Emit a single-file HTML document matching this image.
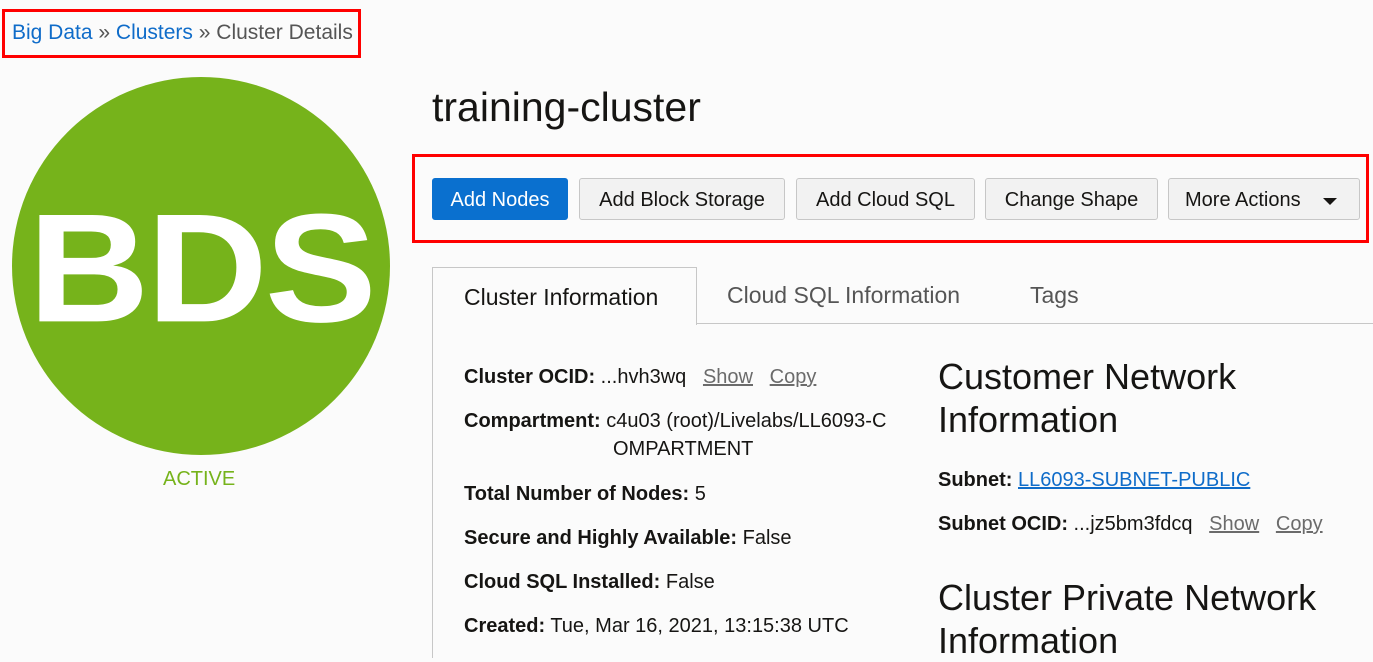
<!DOCTYPE html>
<html><head><meta charset="utf-8"><style>
body{margin:0;width:1373px;height:658px;background:#fbfbfb;font-family:"Liberation Sans",Arial,sans-serif;position:relative;overflow:hidden;color:#161513}
.a{position:absolute;white-space:nowrap}
.btn{position:absolute;top:178px;height:42px;border:1px solid #c7c7c7;border-radius:3px;background:#f2f2f2;font-size:20px;line-height:42px;text-align:center;color:#161513;box-sizing:border-box}
.lbl{font-size:20px}
.lbl b{font-weight:bold}
.lk{color:#6b6b6b;text-decoration:underline}
</style></head><body>
<div class="a" style="left:2px;top:9px;width:359px;height:49px;border:3px solid #f00;box-sizing:border-box"></div>
<div class="a" style="left:12px;top:21px;font-size:21px;color:#555"><span style="color:#0f6cc9">Big Data</span> » <span style="color:#0f6cc9">Clusters</span> » Cluster Details</div>
<div class="a" style="left:12px;top:77px;width:378px;height:378px;border-radius:50%;background:#76b31b"></div>
<div class="a" style="left:12px;top:178px;width:378px;text-align:center;font-size:168px;font-weight:bold;color:#fff;line-height:180px;letter-spacing:-3px;transform:scaleY(0.92)">BDS</div>
<div class="a" style="left:163px;top:468px;font-size:20px;color:#76b31b">ACTIVE</div>
<div class="a" style="left:432px;top:84px;font-size:41px;color:#161513">training-cluster</div>
<div class="a" style="left:412px;top:154px;width:957px;height:89px;border:3px solid #f00;box-sizing:border-box"></div>
<div class="btn" style="left:432px;width:136px;background:#0a70cf;border-color:#0a70cf;color:#fff">Add Nodes</div>
<div class="btn" style="left:579px;width:206px">Add Block Storage</div>
<div class="btn" style="left:796px;width:179px">Add Cloud SQL</div>
<div class="btn" style="left:985px;width:173px">Change Shape</div>
<div class="btn" style="left:1168px;width:192px;text-align:left;padding-left:16px">More Actions<span style="position:absolute;left:154px;top:19px;border-left:7px solid transparent;border-right:7px solid transparent;border-top:7px solid #161513"></span></div>
<div class="a" style="left:432px;top:323px;width:941px;border-top:1px solid #c7c7c7"></div>
<div class="a" style="left:432px;top:267px;width:265px;height:58px;border:1px solid #c7c7c7;border-bottom:none;background:#fbfbfb;box-sizing:border-box"></div>
<div class="a" style="left:464px;top:284px;font-size:23px">Cluster Information</div>
<div class="a" style="left:727px;top:282px;font-size:23px;color:#555">Cloud SQL Information</div>
<div class="a" style="left:1030px;top:282px;font-size:23px;color:#555">Tags</div>
<div class="a" style="left:432px;top:323px;width:1px;height:335px;background:#c7c7c7"></div>
<div class="a lbl" style="left:464px;top:366px"><b>Cluster OCID:</b> ...hvh3wq &nbsp;&nbsp;<span class="lk">Show</span> &nbsp;&nbsp;<span class="lk">Copy</span></div>
<div class="a lbl" style="left:464px;top:410px"><b>Compartment:</b> c4u03 (root)/Livelabs/LL6093-C</div>
<div class="a lbl" style="left:613px;top:438px">OMPARTMENT</div>
<div class="a lbl" style="left:464px;top:483px"><b>Total Number of Nodes:</b> 5</div>
<div class="a lbl" style="left:464px;top:527px"><b>Secure and Highly Available:</b> False</div>
<div class="a lbl" style="left:464px;top:571px"><b>Cloud SQL Installed:</b> False</div>
<div class="a lbl" style="left:464px;top:615px"><b>Created:</b> Tue, Mar 16, 2021, 13:15:38 UTC</div>
<div class="a" style="left:938px;top:355px;font-size:36px;line-height:43px">Customer Network<br>Information</div>
<div class="a lbl" style="left:938px;top:469px"><b>Subnet:</b> <span style="color:#0f6cc9;text-decoration:underline">LL6093-SUBNET-PUBLIC</span></div>
<div class="a lbl" style="left:938px;top:513px"><b>Subnet OCID:</b> ...jz5bm3fdcq &nbsp;&nbsp;<span class="lk">Show</span> &nbsp;&nbsp;<span class="lk">Copy</span></div>
<div class="a" style="left:938px;top:576px;font-size:36px;line-height:43px">Cluster Private Network<br>Information</div>
</body></html>
